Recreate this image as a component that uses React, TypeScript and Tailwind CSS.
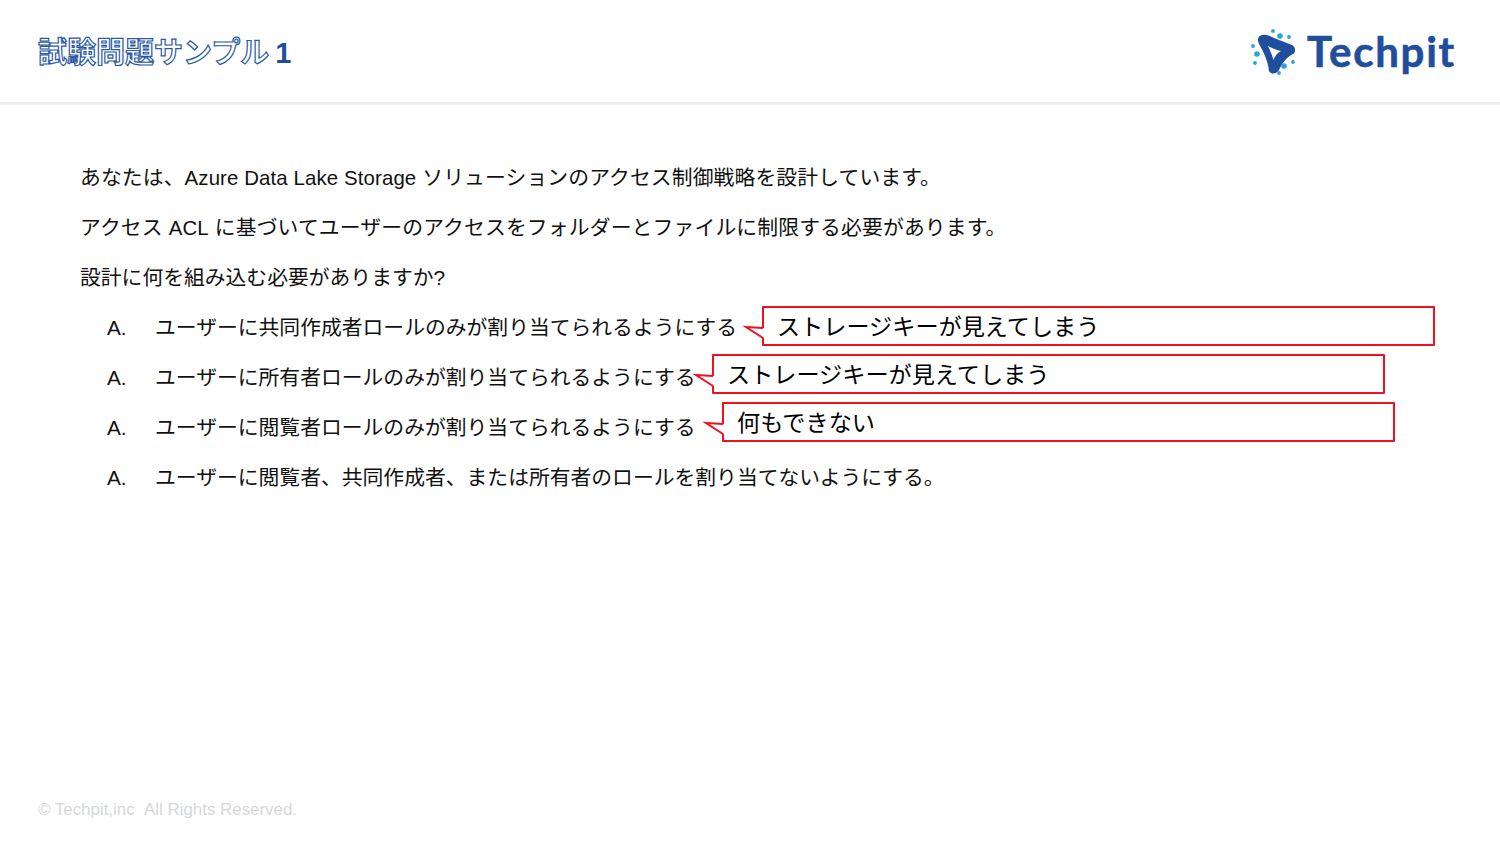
const jp = "font-['Liberation_Sans','Noto_Sans_CJK_JP',sans-serif]";

const options = [
    { text: 'ユーザーに共同作成者ロールのみが割り当てられるようにする' },
    { text: 'ユーザーに所有者ロールのみが割り当てられるようにする' },
    { text: 'ユーザーに閲覧者ロールのみが割り当てられるようにする' },
    { text: 'ユーザーに閲覧者、共同作成者、または所有者のロールを割り当てないようにする。' },
];

function Logo() {
    return (
        <div className="flex items-center">
            <svg width="50" height="52" viewBox="0 0 50 52" className="mr-[7px]">
                <path
                    d="M12 10 C17 9 20 11 24 13 L42 20 C46 22 46 27 43 29 C37 32 32 38 29 45 C27 49 21 50 19 46 C18 36 14 28 9 19 C7 14 8 11 12 10 Z M18 21 C20 25 22 30 23.5 35 C25 31 27 28 31 26 C26 25 22 23 18 21 Z"
                    fill="#1f4e9c"
                    fillRule="evenodd"
                />
                <circle cx="23" cy="6" r="1.9" fill="#2ea3d6" />
                <circle cx="30" cy="11" r="2.8" fill="#2ea3d6" />
                <circle cx="39" cy="12" r="1.9" fill="#2ea3d6" />
                <circle cx="3" cy="21" r="1.9" fill="#2ea3d6" />
                <circle cx="7" cy="29" r="2.8" fill="#2ea3d6" />
                <circle cx="5" cy="38" r="1.9" fill="#2ea3d6" />
                <circle cx="34" cy="41" r="2.8" fill="#2ea3d6" />
                <circle cx="43" cy="37" r="1.9" fill="#2ea3d6" />
                <circle cx="29" cy="48" r="1.9" fill="#2ea3d6" />
            </svg>
            <span className="font-['Lato',sans-serif] text-[42px] font-bold leading-none tracking-[1.75px] text-[#1f4e9c] [-webkit-text-stroke:0.6px_#1f4e9c]">
                Techpit
            </span>
        </div>
    );
}

function Callout({ left, top, width, label }: { left: number; top: number; width: number; label: string }) {
    return (
        <div className="absolute h-[40px]" style={{ left, top, width }}>
            <div className="flex h-full items-center rounded-[1px] border-2 border-[#f01020] bg-white pl-[13px] pt-[2px] text-[23.15px] text-black">
                {label}
            </div>
            {/* tail sits over the left border, white part hides that bit of it */}
            <svg className="absolute -left-[17px] top-0 overflow-visible" width="20" height="40">
                <path d="M19 22 L1 21 L19 32 Z" fill="#fff" />
                <path d="M18 22 L1 21 L18 32" fill="none" stroke="#f01020" strokeWidth="2" />
            </svg>
        </div>
    );
}

export default function App() {
    return (
        <div className={`relative h-[844px] w-[1500px] overflow-hidden bg-white ${jp}`}>
            <header className="flex h-[105px] items-center justify-between border-b-[3px] border-[#eeeeee] pl-[38px] pr-[44px]">
                <h1 className="mt-[6px] text-[29px] font-bold text-white [-webkit-text-stroke:1.2px_#2a5aa5]">
                    試験問題サンプル<span className="ml-[6px] text-[#1f4e9c] [-webkit-text-stroke:0]">1</span>
                </h1>
                <Logo />
            </header>

            <main className="pl-[80px] pt-[48px] text-[20.8px] leading-[50px] text-[#111111]">
                <p className="tracking-[0.12px]">あなたは、<span className="text-[20.4px]">Azure Data Lake Storage</span> ソリューションのアクセス制御戦略を設計しています。</p>
                <p className="tracking-[0.15px]">アクセス <span className="text-[20.4px]">ACL</span> に基づいてユーザーのアクセスをフォルダーとファイルに制限する必要があります。</p>
                <p>設計に何を組み込む必要がありますか?</p>
                <ul className="pl-[27px]">
                    {options.map((o) => (
                        <li key={o.text} className="flex">
                            <span className="w-[48px]">A.</span>
                            <span>{o.text}</span>
                        </li>
                    ))}
                </ul>
            </main>

            <Callout left={762} top={306} width={673} label="ストレージキーが見えてしまう" />
            <Callout left={712} top={354} width={673} label="ストレージキーが見えてしまう" />
            <Callout left={722} top={402} width={673} label="何もできない" />

            <footer className="absolute bottom-[22px] left-[38px] text-[16.9px] text-[#d5d7dd]">
                © Techpit,inc &nbsp;All Rights Reserved.
            </footer>
        </div>
    );
}
